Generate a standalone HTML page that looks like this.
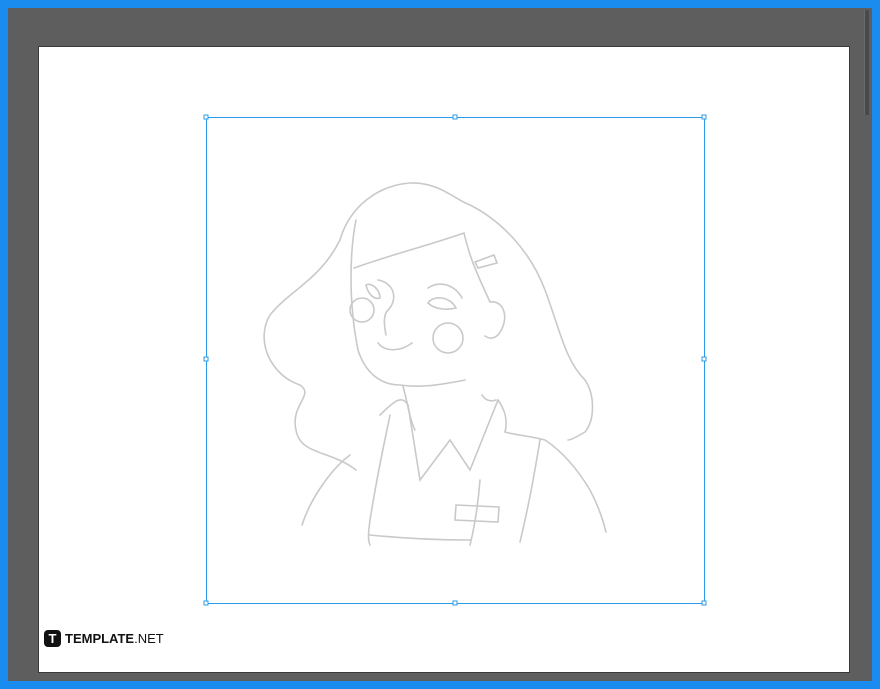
<!DOCTYPE html>
<html><head><meta charset="utf-8"><style>
html,body{margin:0;padding:0}
body{width:880px;height:689px;background:#1a8cf0;position:relative;overflow:hidden;font-family:"Liberation Sans",sans-serif}
.gray{position:absolute;left:8px;top:8px;width:864px;height:673px;background:#5e5e5e}
.canvas{position:absolute;left:39px;top:47px;width:810px;height:625px;background:#fff;box-shadow:0 0 0 1px #3a3a3a}
.sb{position:absolute;left:864px;top:10px;width:4px;height:105px;background:#4a4a4a;border-left:1px solid #6a6a6a}
.logo{position:absolute;left:44px;top:630px;display:flex;align-items:center}
.logo .ic{width:17px;height:17px;background:#111;border-radius:4px;color:#fff;font-weight:bold;font-size:13px;line-height:17px;text-align:center}
.logo .t{margin-left:4px;font-size:13px;font-weight:bold;color:#111;letter-spacing:0}
.logo .t span{font-weight:normal}
</style></head><body>
<div class="gray"></div>
<div class="sb"></div>
<div class="canvas"></div>
<svg style="position:absolute;left:0;top:0" width="880" height="689">
<g fill="none" stroke="#c9c9c9" stroke-width="1.6" stroke-linecap="round">
<path d="M356,470 C330,450 300,455 296,430 C290,405 315,395 300,385 C270,375 255,340 270,315 C290,290 320,280 340,240 C350,205 380,185 410,183 C440,182 455,200 470,205 C500,220 530,250 545,290 C560,330 565,360 585,380 C595,395 595,420 585,432 C575,438 570,440 568,440"/>
<path d="M356,220 C350,250 348,300 358,350 C365,372 380,385 400,385 C420,388 440,385 465,380"/>
<path d="M354,268 C390,255 430,245 464,233 C470,260 480,280 490,302 C505,300 510,320 498,335 C492,340 488,338 485,336"/>
<path d="M475,262 L494,255 L497,263 L478,268 Z"/>
<path d="M366,285 C372,282 380,290 380,298 C374,300 368,294 366,285 Z"/>
<path d="M378,280 C395,283 398,300 388,310 C383,315 384,325 386,335"/>
<path d="M378,343 C385,352 400,352 412,343"/>
<path d="M428,303 C433,295 450,296 456,308 C448,310 435,310 428,303 Z"/>
<path d="M428,288 C440,280 455,285 462,298"/>
<circle cx="362" cy="310" r="12"/><circle cx="448" cy="338" r="15"/>
<path d="M403,386 C408,405 410,420 415,430"/>
<path d="M482,395 C485,400 490,402 496,400"/>
<path d="M380,415 C395,400 402,395 408,405 L420,480 L450,440 L470,470 L498,400 C505,410 508,420 505,432"/>
<path d="M390,415 C385,440 378,470 370,520 C368,535 368,540 370,545"/>
<path d="M370,535 C400,538 440,540 470,540"/>
<path d="M505,432 C515,435 530,436 545,440 C560,450 575,465 590,490 C598,505 603,520 606,532"/>
<path d="M540,440 C535,470 530,500 520,542"/>
<path d="M350,455 C330,470 310,500 302,525"/>
<path d="M480,480 C478,505 475,525 470,545"/>
<path d="M456,505 L499,507 L498,522 L455,520 Z"/>
</g>
<g fill="none" stroke="#2a9be8" stroke-width="1">
<rect x="206.5" y="117.5" width="498" height="486"/>
</g>
<g fill="#fff" stroke="#2a9be8" stroke-width="1">
<rect x="204" y="115" width="4" height="4"/><rect x="453" y="115" width="4" height="4"/><rect x="702" y="115" width="4" height="4"/>
<rect x="204" y="357" width="4" height="4"/><rect x="702" y="357" width="4" height="4"/>
<rect x="204" y="601" width="4" height="4"/><rect x="453" y="601" width="4" height="4"/><rect x="702" y="601" width="4" height="4"/>
</g>
</svg>
<div class="logo"><div class="ic">T</div><div class="t">TEMPLATE<span>.NET</span></div></div>
</body></html>
